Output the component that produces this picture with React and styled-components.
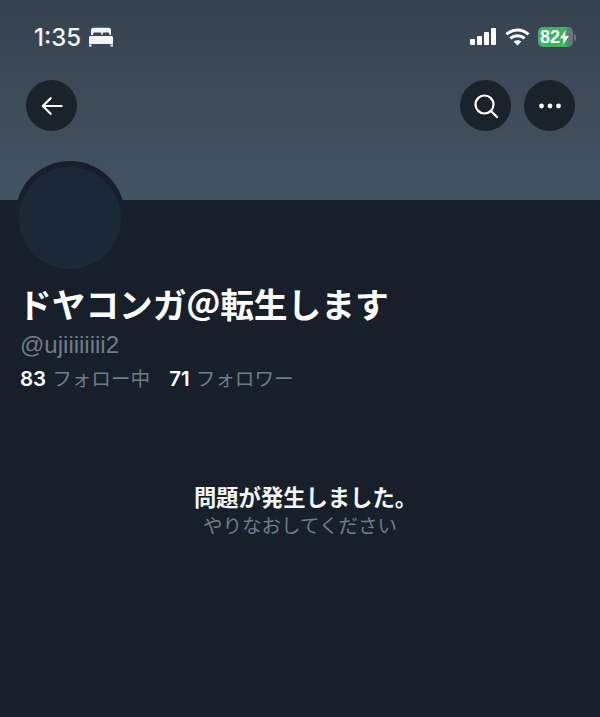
import React from "react";
import styled, { createGlobalStyle } from "styled-components";

const Global = createGlobalStyle`
  html, body { margin: 0; padding: 0; background: #17202a; }
  * { box-sizing: border-box; }
`;
const JP = `"Liberation Sans", "Noto Sans CJK JP", sans-serif`;

const Page = styled.div`
  width: 600px; height: 717px; overflow: hidden; background: #17202a; color: #fff;
  font-family: ${JP}; display: flex; flex-direction: column;
`;
const Banner = styled.header`
  height: 200px; flex: none; padding: 23px 25px 0 26px;
  background: linear-gradient(180deg, #36424f 0%, #3e4b59 50%, #445463 100%);
`;
const StatusBar = styled.div`
  display: flex; align-items: center; justify-content: space-between;
  height: 28px; padding: 0 0 0 8px; margin-right: -1px;
`;
const Clock = styled.div`display: flex; align-items: center; gap: 7px;`;
const Time = styled.span`
  font-family: Inter, "Liberation Sans", sans-serif; font-size: 24px; font-weight: 500; color: #f2f4f5;
`;
const StatusIcons = styled.div`display: flex; align-items: center; gap: 8px;`;
const Battery = styled.div`display: flex; align-items: center; gap: 1px;`;
const BatteryBody = styled.div`
  width: 35px; height: 20px; border-radius: 5px; display: flex; align-items: center; justify-content: flex-start;
  padding-left: 2px; overflow: hidden; font: 700 18px "Liberation Sans", sans-serif; color: #fff;
  background: linear-gradient(90deg, #3fb45f 0 29px, #6c7680 29px 100%);
`;
const BatteryCap = styled.div`width: 2px; height: 7px; border-radius: 0 2px 2px 0; background: #6c7680;`;
const Nav = styled.nav`
  display: flex; justify-content: space-between; margin-top: 29px;
`;
const NavGroup = styled.div`display: flex; gap: 13px;`;
const RoundButton = styled.button`
  width: 51px; height: 51px; padding: 0; border: 0; border-radius: 50%; background: #1a222b;
  display: flex; align-items: center; justify-content: center; color: #fff;
`;
const Profile = styled.section`
  flex: 1; padding: 0 20px; display: flex; flex-direction: column;
`;
const Avatar = styled.div`
  width: 110px; height: 110px; margin: -39px 0 0 -5px; border-radius: 50%; background: #17202a;
  display: flex; align-items: flex-start; justify-content: center; padding-top: 6px; flex: none;
`;
const AvatarInner = styled.div`
  width: 102px; height: 102px; border-radius: 50%; background: #1b2838;
`;
const Name = styled.h1`
  margin: 13px 0 0 -2px; font-size: 33.7px; line-height: 44px; font-weight: 700; white-space: nowrap; color: #fff;
`;
const Handle = styled.div`
  margin-top: 2px; font-size: 24px; line-height: 30px; color: #6f7d8a;
`;
const Stats = styled.div`
  margin-top: 5px; display: flex; gap: 19px; font-size: 19.6px; line-height: 28px;
`;
const Stat = styled.span`display: flex; gap: 6px; align-items: baseline;`;
const Count = styled.b`font-family: Inter, "Liberation Sans", sans-serif; font-weight: 600; font-size: 20.5px; color: #fff;`;
const StatLabel = styled.span`color: #6f7d8a; font-weight: 400;`;
const ErrorBox = styled.div`
  margin-top: 92px; display: flex; flex-direction: column; align-items: center; text-align: center;
`;
const ErrorTitle = styled.div`font-size: 22.3px; line-height: 28px; font-weight: 700; color: #f3f5f6; padding-left: 11px;`;
const ErrorHint = styled.div`font-size: 19.5px; line-height: 26px; color: #6f7d8a;`;

export default function App() {
  return (
    <Page>
      <Global />
      <Banner>
        <StatusBar>
          <Clock>
            <Time>1:35</Time>
            <svg width="26" height="20" viewBox="0 0 26 20" fill="#f2f4f5">
              <path d="M3 3C3 1.6 4.2.7 5.6.7h14.8c1.4 0 2.6.9 2.6 2.3V8h-1.6V6.8c0-.9-.7-1.4-1.6-1.4h-3.6c-.9 0-1.6.5-1.6 1.4V8h-1.2V6.8c0-.9-.7-1.4-1.6-1.4H6.8c-.9 0-1.6.5-1.6 1.4V8H3z" />
              <path d="M2.4 9h21.2c.9 0 1.4.7 1.4 1.6V17H1v-6.4C1 9.7 1.5 9 2.4 9z" />
              <path d="M1 17.6h2.6v1.8H1zM22.4 17.6H25v1.8h-2.6z" />
            </svg>
          </Clock>
          <StatusIcons>
            <svg width="27" height="18" viewBox="0 0 27 18" fill="#fff">
              <rect x="0" y="11" width="5" height="6" rx="1" />
              <rect x="7" y="8" width="5" height="9" rx="1" />
              <rect x="14" y="4" width="5" height="13" rx="1" />
              <rect x="21" y="0" width="5" height="17" rx="1" />
            </svg>
            <svg width="25" height="18" viewBox="0 0 25 18" fill="none" stroke="#fff" strokeWidth="3">
              <path d="M1.5 6.4C7.8.6 17.2.6 23.5 6.4" />
              <path d="M5.4 10.4c4-3.6 10.2-3.6 14.2 0" />
              <path d="M12.5 17.5l-3.8-3.9c2.2-1.8 5.4-1.8 7.6 0z" fill="#fff" stroke="none" />
            </svg>
            <Battery>
              <BatteryBody>
                82
                <svg width="9" height="15" viewBox="0 0 9 15" fill="#fff"><path d="M5.5 0L0 8.5h3.5L2.5 15 9 6H5z" /></svg>
              </BatteryBody>
              <BatteryCap />
            </Battery>
          </StatusIcons>
        </StatusBar>
        <Nav>
          <RoundButton aria-label="戻る">
            <svg width="22" height="22" viewBox="0 0 24 24" fill="none" stroke="#fff" strokeWidth="2.4" strokeLinecap="round" strokeLinejoin="round">
              <path d="M22.5 12H2M10.5 3.5L2 12l8.5 8.5" />
            </svg>
          </RoundButton>
          <NavGroup>
            <RoundButton aria-label="検索">
              <svg width="26" height="26" viewBox="0 0 26 26" fill="none" stroke="#fff" strokeWidth="2.2" strokeLinecap="round">
                <circle cx="11.5" cy="11.5" r="9" />
                <path d="M18 18l6 6" />
              </svg>
            </RoundButton>
            <RoundButton aria-label="その他">
              <svg width="24" height="6" viewBox="0 0 24 6" fill="#fff">
                <circle cx="3.5" cy="3" r="2.4" /><circle cx="12" cy="3" r="2.4" /><circle cx="20.5" cy="3" r="2.4" />
              </svg>
            </RoundButton>
          </NavGroup>
        </Nav>
      </Banner>
      <Profile>
        <Avatar><AvatarInner /></Avatar>
        <Name>ドヤコンガ＠転生します</Name>
        <Handle>@ujiiiiiiii2</Handle>
        <Stats>
          <Stat><Count>83</Count><StatLabel>フォロー中</StatLabel></Stat>
          <Stat><Count>71</Count><StatLabel>フォロワー</StatLabel></Stat>
        </Stats>
        <ErrorBox>
          <ErrorTitle>問題が発生しました。</ErrorTitle>
          <ErrorHint>やりなおしてください</ErrorHint>
        </ErrorBox>
      </Profile>
    </Page>
  );
}
